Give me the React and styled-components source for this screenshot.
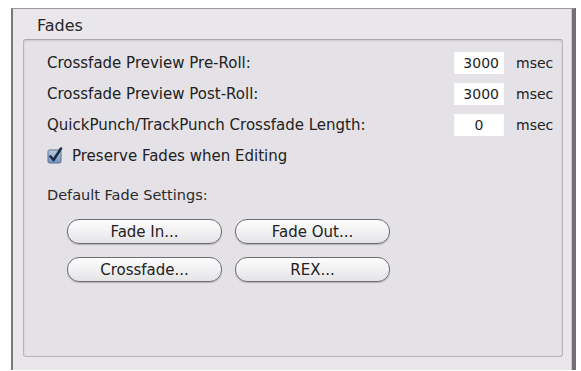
import React from 'react';
import styled, { createGlobalStyle } from 'styled-components';

const GlobalStyle = createGlobalStyle`
  html, body {
    margin: 0;
    padding: 0;
    background: #ffffff;
    overflow: hidden;
  }
  body {
    font-family: "DejaVu Sans", "Liberation Sans", sans-serif;
  }
`;

const Window = styled.div`
  margin: 8px 0 0 11px;
  width: 565px;
  height: 362px;
  background: #e9e7eb;
  border-top: 1px solid #9a989c;
  border-left: 2px solid #7a787c;
  border-right: 4px solid #727074;
  box-shadow: inset -1px 0 0 #c9c7cb;
  padding: 0 9px 0 10px;
  box-sizing: border-box;
  display: flex;
  flex-direction: column;
`;

const Title = styled.div`
  font-size: 16px;
  color: #262626;
  padding: 7px 0 0 14px;
  height: 30px;
  box-sizing: border-box;
`;

const GroupBox = styled.div`
  height: 318px;
  background: #e4e1e7;
  border: 1px solid #b6b4b9;
  border-top-color: #a9a7ac;
  border-radius: 3px;
  box-shadow: inset 0 1px 2px rgba(0, 0, 0, 0.12);
  padding: 7px 10px 0 23px;
  box-sizing: border-box;
  display: flex;
  flex-direction: column;
`;

const Row = styled.div`
  display: flex;
  align-items: center;
  height: 31px;
`;

const Label = styled.div`
  flex: 1;
  font-size: 15px;
  color: #222;
  white-space: nowrap;
`;

const NumberField = styled.div`
  width: 50px;
  height: 23px;
  background: #ffffff;
  box-shadow: inset 0 1px 1px rgba(0, 0, 0, 0.12);
  font-size: 14px;
  color: #1e1e1e;
  display: flex;
  align-items: center;
  justify-content: ${(p) => (p.$center ? 'center' : 'flex-end')};
  padding-right: ${(p) => (p.$center ? '0' : '5px')};
  box-sizing: border-box;
`;

const Unit = styled.div`
  width: 48px;
  padding-left: 12px;
  box-sizing: border-box;
  font-size: 14px;
  color: #222;
`;

const CheckRow = styled(Row)`
  gap: 8px;
`;

const CheckLabel = styled.div`
  font-size: 15px;
  color: #222;
`;

const SectionLabel = styled.div`
  font-size: 14.5px;
  color: #2a2a2a;
  margin-top: 14px;
  height: 20px;
  display: flex;
  align-items: center;
`;

const ButtonGrid = styled.div`
  display: grid;
  grid-template-columns: 155px 155px;
  column-gap: 13px;
  row-gap: 13px;
  margin: 14px 0 0 20px;
`;

const PillButton = styled.button`
  height: 25px;
  border-radius: 12px;
  border: 1.5px solid #6e6c70;
  background: linear-gradient(#fdfdfd, #f1f0f2 50%, #e4e3e6);
  box-shadow: 0 1px 1px rgba(0, 0, 0, 0.2);
  font-family: "DejaVu Sans", "Liberation Sans", sans-serif;
  font-size: 15px;
  color: #222;
  padding: 0;
  text-align: center;
`;

function Checkbox() {
  return (
    <svg width="17" height="17" viewBox="0 0 17 17">
      <defs>
        <linearGradient id="cb" x1="0" y1="0" x2="0" y2="1">
          <stop offset="0" stopColor="#b9cde3" />
          <stop offset="1" stopColor="#6f95c2" />
        </linearGradient>
      </defs>
      <rect x="1" y="3" width="13" height="13" rx="1.5" fill="url(#cb)" stroke="#5d6f86" />
      <path d="M3.5 9.5 L6.5 13 L14 1.5" fill="none" stroke="#1d2b45" strokeWidth="2.6" strokeLinecap="round" strokeLinejoin="round" />
    </svg>
  );
}

const rows = [
  { label: 'Crossfade Preview Pre-Roll:', value: '3000' },
  { label: 'Crossfade Preview Post-Roll:', value: '3000' },
  { label: 'QuickPunch/TrackPunch Crossfade Length:', value: '0', center: true },
];

export default function App() {
  return (
    <>
      <GlobalStyle />
      <Window>
        <Title>Fades</Title>
        <GroupBox>
          {rows.map((r) => (
            <Row key={r.label}>
              <Label>{r.label}</Label>
              <NumberField $center={r.center}>{r.value}</NumberField>
              <Unit>msec</Unit>
            </Row>
          ))}
          <CheckRow>
            <Checkbox />
            <CheckLabel>Preserve Fades when Editing</CheckLabel>
          </CheckRow>
          <SectionLabel>Default Fade Settings:</SectionLabel>
          <ButtonGrid>
            <PillButton>Fade In...</PillButton>
            <PillButton>Fade Out...</PillButton>
            <PillButton>Crossfade...</PillButton>
            <PillButton>REX...</PillButton>
          </ButtonGrid>
        </GroupBox>
      </Window>
    </>
  );
}
